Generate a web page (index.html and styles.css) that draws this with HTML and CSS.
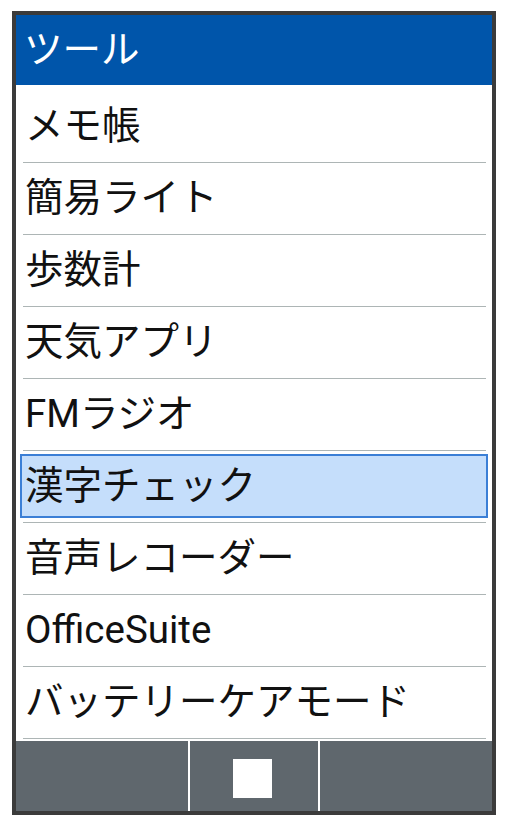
FILE: index.html
```html
<!DOCTYPE html>
<html lang="ja">
<head>
<meta charset="utf-8">
<title>ツール</title>
<link rel="stylesheet" href="styles.css">
</head>
<body>
<div class="frame">
  <div class="header">ツール</div>
  <ul class="list">
    <li class="item"><span class="label">メモ帳</span></li>
    <li class="item"><span class="label">簡易ライト</span></li>
    <li class="item"><span class="label">歩数計</span></li>
    <li class="item"><span class="label">天気アプリ</span></li>
    <li class="item"><span class="label">FMラジオ</span></li>
    <li class="item selected"><span class="label">漢字チェック</span></li>
    <li class="item"><span class="label">音声レコーダー</span></li>
    <li class="item"><span class="label">OfficeSuite</span></li>
    <li class="item"><span class="label">バッテリーケアモード</span></li>
  </ul>
  <div class="softkeys">
    <div class="key key-left"></div>
    <div class="key key-center"><span class="square"></span></div>
    <div class="key key-right"></div>
  </div>
</div>
</body>
</html>
```

FILE: styles.css
```css
html, body {
  margin: 0;
  padding: 0;
  background: #ffffff;
}

body {
  font-family: Roboto, "Noto Sans CJK JP", sans-serif;
  font-size: 38.5px;
  color: #111111;
}

.frame {
  box-sizing: border-box;
  margin: 11px 0 0 12px;
  width: 484px;
  height: 804px;
  border: 4px solid #3b3b3b;
  display: flex;
  flex-direction: column;
  background: #ffffff;
}

.header {
  height: 70px;
  flex: none;
  background: #0055aa;
  color: #ffffff;
  display: flex;
  align-items: center;
  padding-left: 8px;
  line-height: 1;
}

.list {
  list-style: none;
  margin: 0;
  padding: 6px 0 0 0;
  flex: 1;
  overflow: hidden;
}

.item {
  box-sizing: border-box;
  height: 72px;
  margin: 0 6px 0 7px;
  border-bottom: 1px solid #adb5b5;
  display: flex;
  align-items: stretch;
}

.label {
  flex: 1;
  display: flex;
  align-items: center;
  padding-left: 2px;
  line-height: 1;
}

.item.selected .label {
  margin: 3px -2px 4px -3px;
  border: 2px solid #3b7fd6;
  background: #c5defb;
  padding-left: 3px;
}

.softkeys {
  height: 70px;
  flex: none;
  background: #5f676d;
  display: flex;
}

.key {
  height: 100%;
}

.key-left {
  width: 172px;
  border-right: 2px solid #ffffff;
}

.key-center {
  width: 128px;
  border-right: 2px solid #ffffff;
}

.key-right {
  flex: 1;
}

.square {
  display: block;
  width: 39px;
  height: 39px;
  margin: 18px 0 0 43px;
  background: #ffffff;
}
```
